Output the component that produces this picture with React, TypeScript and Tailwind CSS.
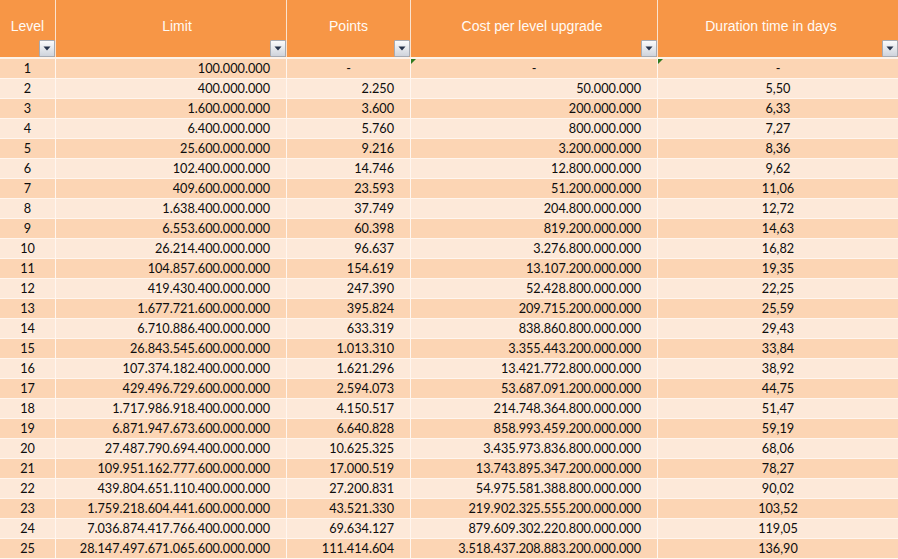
import React from 'react';

const rows: [string, string, string, string][] = [
  ['100.000.000', '-', '-', '-'],
  ['400.000.000', '2.250', '50.000.000', '5,50'],
  ['1.600.000.000', '3.600', '200.000.000', '6,33'],
  ['6.400.000.000', '5.760', '800.000.000', '7,27'],
  ['25.600.000.000', '9.216', '3.200.000.000', '8,36'],
  ['102.400.000.000', '14.746', '12.800.000.000', '9,62'],
  ['409.600.000.000', '23.593', '51.200.000.000', '11,06'],
  ['1.638.400.000.000', '37.749', '204.800.000.000', '12,72'],
  ['6.553.600.000.000', '60.398', '819.200.000.000', '14,63'],
  ['26.214.400.000.000', '96.637', '3.276.800.000.000', '16,82'],
  ['104.857.600.000.000', '154.619', '13.107.200.000.000', '19,35'],
  ['419.430.400.000.000', '247.390', '52.428.800.000.000', '22,25'],
  ['1.677.721.600.000.000', '395.824', '209.715.200.000.000', '25,59'],
  ['6.710.886.400.000.000', '633.319', '838.860.800.000.000', '29,43'],
  ['26.843.545.600.000.000', '1.013.310', '3.355.443.200.000.000', '33,84'],
  ['107.374.182.400.000.000', '1.621.296', '13.421.772.800.000.000', '38,92'],
  ['429.496.729.600.000.000', '2.594.073', '53.687.091.200.000.000', '44,75'],
  ['1.717.986.918.400.000.000', '4.150.517', '214.748.364.800.000.000', '51,47'],
  ['6.871.947.673.600.000.000', '6.640.828', '858.993.459.200.000.000', '59,19'],
  ['27.487.790.694.400.000.000', '10.625.325', '3.435.973.836.800.000.000', '68,06'],
  ['109.951.162.777.600.000.000', '17.000.519', '13.743.895.347.200.000.000', '78,27'],
  ['439.804.651.110.400.000.000', '27.200.831', '54.975.581.388.800.000.000', '90,02'],
  ['1.759.218.604.441.600.000.000', '43.521.330', '219.902.325.555.200.000.000', '103,52'],
  ['7.036.874.417.766.400.000.000', '69.634.127', '879.609.302.220.800.000.000', '119,05'],
  ['28.147.497.671.065.600.000.000', '111.414.604', '3.518.437.208.883.200.000.000', '136,90'],
];

const headers = [
  { label: 'Level', pad: '' },
  { label: 'Limit', pad: 'pl-[12px]' },
  { label: 'Points', pad: '' },
  { label: 'Cost per level upgrade', pad: 'pr-[4px]' },
  { label: 'Duration time in days', pad: 'pr-[14px]' },
];

function FilterButton() {
  return (
    <div className="flex h-[17px] w-[16px] items-center justify-center rounded-[1px] border border-[#a7abb3] bg-gradient-to-b from-[#fbfbfc] to-[#cfd4dc]">
      <svg width="8" height="5" viewBox="0 0 8 5">
        <path d="M0.5 0.5 H7.5 L4 4.5 Z" fill="#26324a" />
      </svg>
    </div>
  );
}

function ErrorMark() {
  return (
    <svg className="absolute left-0 top-0" width="5" height="5" viewBox="0 0 5 5">
      <path d="M0 0 H5 L0 5 Z" fill="#2f7a1f" />
    </svg>
  );
}

function App() {
  return (
    <div
      className="h-[559px] w-[898px] overflow-hidden bg-[#fde9d9] text-[#0d0d0d]"
      style={{ fontFamily: 'Lato, "Liberation Sans", sans-serif' }}
    >
      {/* Header */}
      <div className="grid h-[59px] grid-cols-[56px_231px_124px_247px_240px] border-b-2 border-[#fdf3ea] bg-[#f79646]">
        {headers.map((h, i) => (
          <div
            key={h.label}
            className={`flex flex-col justify-between ${i < 4 ? 'border-r border-[#fbe3cf]' : ''}`}
          >
            <div
              className={`pt-[17px] text-center text-[14px] leading-[18px] text-[#fffaf5] ${h.pad}`}
              style={{ fontFamily: '"Liberation Sans", Arial, sans-serif' }}
            >
              {h.label}
            </div>
            <div className="self-end">
              <FilterButton />
            </div>
          </div>
        ))}
      </div>

      {/* Body */}
      {rows.map((r, idx) => (
        <div
          key={idx}
          className={`grid h-[20px] grid-cols-[56px_231px_124px_247px_240px] border-b border-[#fff6ef] text-[12.7px] leading-[19px] ${
            idx % 2 === 0 ? 'bg-[#fcd5b4]' : 'bg-[#fde9d9]'
          }`}
        >
          <div className="border-r border-[#fff6ef] text-center">{idx + 1}</div>
          <div className="border-r border-[#fff6ef] pr-[16px] text-right">{r[0]}</div>
          <div className={`border-r border-[#fff6ef] ${r[1] === '-' ? 'text-center' : 'pr-[16px] text-right'}`}>
            {r[1]}
          </div>
          <div
            className={`relative border-r border-[#fff6ef] ${r[2] === '-' ? 'text-center' : 'pr-[16px] text-right'}`}
          >
            {idx === 0 && <ErrorMark />}
            {r[2]}
          </div>
          <div className="relative text-center">
            {idx === 0 && <ErrorMark />}
            {r[3]}
          </div>
        </div>
      ))}
    </div>
  );
}

export default App;
